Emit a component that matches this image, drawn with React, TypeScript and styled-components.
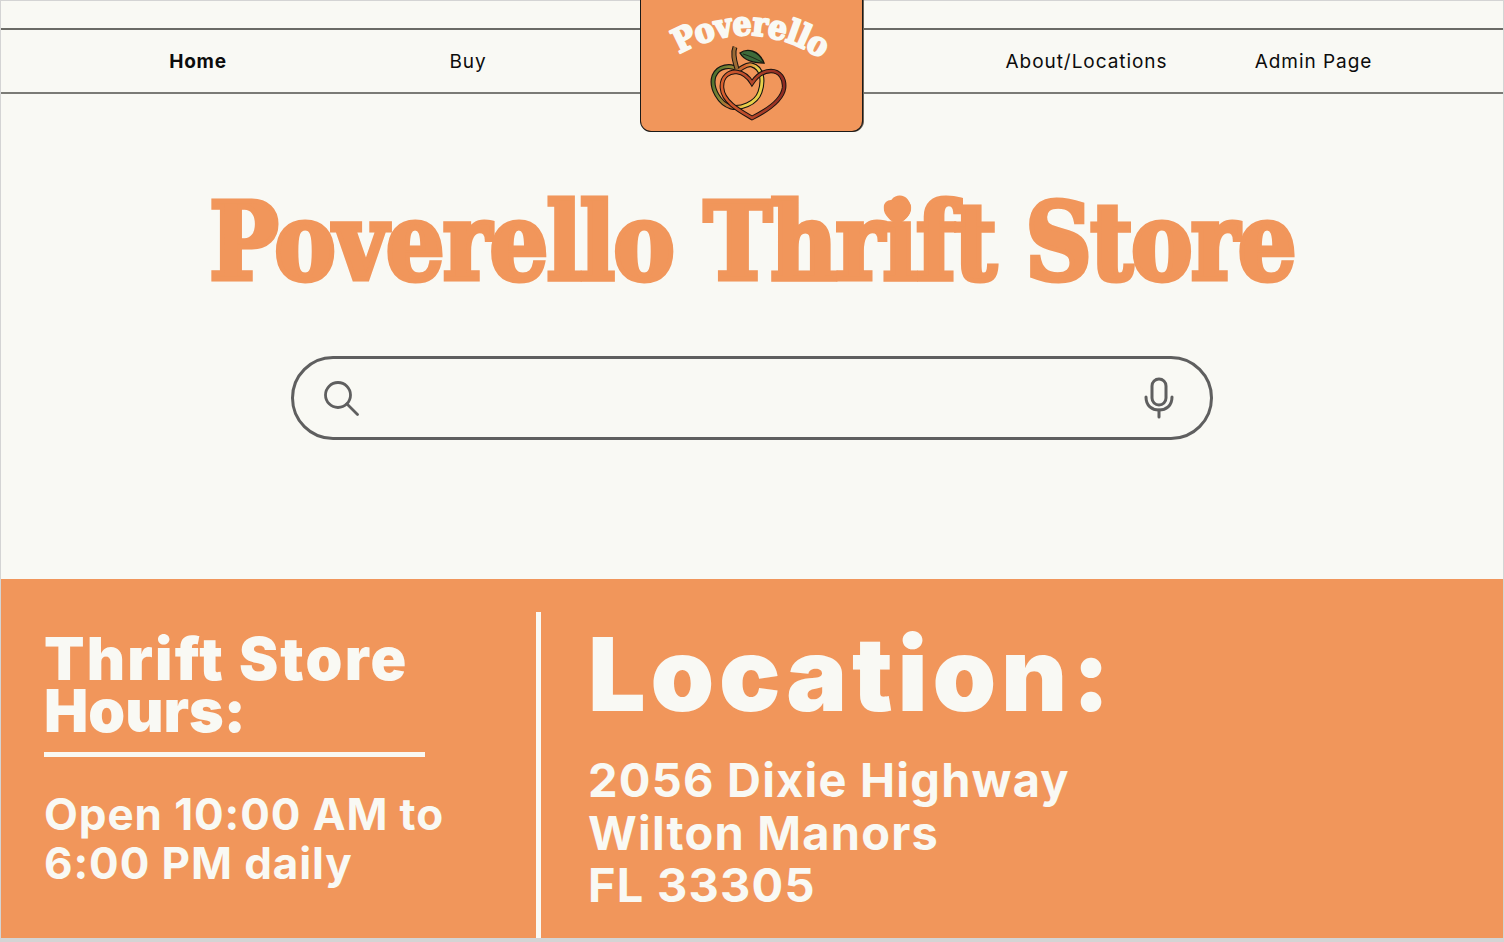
import React from "react";
import styled, { createGlobalStyle } from "styled-components";

const ORANGE = "#f1965b";
const CREAM = "#f9f9f4";
const BODY_FONT = `Inter, "Noto Sans", sans-serif`;
const DISPLAY_FONT = `"DejaVu Serif Condensed", "DejaVu Serif", serif`;

const Global = createGlobalStyle`
  html, body { margin: 0; padding: 0; background: #d6d6d6; }
  * { box-sizing: border-box; }
`;

const Frame = styled.div`
  width: 1504px;
  height: 942px;
  padding: 1px 1px 4px 1px;
  background: #d4d4d4;
  overflow: hidden;
`;
const Page = styled.main`
  height: 100%;
  display: flex;
  flex-direction: column;
  background: ${CREAM};
`;
const Header = styled.header`
  position: relative;
  padding-top: 27px;
`;
const Nav = styled.nav`
  height: 66px;
  display: grid;
  grid-template-columns: 270px 270px 1fr 227px 227px;
  padding: 2px 76px 0 62px;
  align-items: center;
  border-top: 2px solid #6b6b66;
  border-bottom: 2px solid #7b7b76;
`;
const NavLink = styled.a<{ $active?: boolean }>`
  justify-self: center;
  font: ${(p) => (p.$active ? 700 : 400)} 19px/24px ${BODY_FONT};
  letter-spacing: ${(p) => (p.$active ? 0.8 : 0.95)}px;
  color: #0c0c0c;
`;
const LogoCard = styled.div`
  position: absolute;
  top: -1px;
  left: 639px;
  width: 223px;
  height: 132px;
  background: ${ORANGE};
  border: 1px solid #1c1a18;
  border-top: 0;
  border-radius: 0 0 11px 11px;
  box-shadow: 1px 0 0 #6f6558;
`;
const Hero = styled.section`
  flex: 1;
  display: flex;
  flex-direction: column;
  align-items: center;
`;
const Title = styled.h1`
  margin: 83px 0 0;
  font: 700 106px/130px ${DISPLAY_FONT};
  letter-spacing: -1.4px;
  white-space: nowrap;
  color: ${ORANGE};
  -webkit-text-stroke: 5px ${ORANGE};
  transform: scaleX(0.96);
`;
const HeartI = styled.span`
  position: relative;
  display: inline-block;
`;
const HeartDot = styled.svg`
  position: absolute;
  left: 50%;
  top: 23px;
  width: 29px;
  height: 25px;
  margin-left: -17px;
  fill: ${ORANGE};
`;
const SearchBar = styled.div`
  width: 922px;
  height: 84px;
  margin: 49px 0 0 -1px;
  display: flex;
  align-items: center;
  justify-content: space-between;
  padding: 0 36px 0 29px;
  border: 3px solid #5f5f5f;
  border-radius: 42px;
  color: #5f5f5f;
`;
const Footer = styled.footer`
  height: 359px;
  display: grid;
  grid-template-columns: 535px 5px 1fr;
  background: ${ORANGE};
  color: ${CREAM};
  font-family: ${BODY_FONT};
`;
const HoursColumn = styled.div`
  padding: 54px 0 0 43px;
`;
const Divider = styled.div`
  margin-top: 33px;
  background: ${CREAM};
`;
const HoursTitle = styled.h2`
  margin: 0;
  width: 381px;
  padding-bottom: 15px;
  border-bottom: 5px solid ${CREAM};
  font-size: 59px;
  line-height: 52px;
  font-weight: 900;
  letter-spacing: 2.2px;
`;
const HoursWord = styled.span`
  letter-spacing: 0;
`;
const HoursText = styled.p`
  margin: 33px 0 0;
  font-size: 44px;
  line-height: 49px;
  font-weight: 700;
  letter-spacing: 0.9px;
`;
const LocationColumn = styled.div`
  padding: 30px 0 0 47px;
`;
const LocationTitle = styled.h2`
  margin: 0;
  font-size: 102px;
  line-height: 130px;
  font-weight: 900;
  letter-spacing: 4.8px;
`;
const Address = styled.p`
  margin: 15px 0 0;
  font-size: 47px;
  line-height: 52.5px;
  font-weight: 700;
  letter-spacing: 1.2px;
`;

const LogoArt = () => (
  <svg width="222" height="131" viewBox="1 0 222 131">
    <defs>
      <linearGradient id="apple" x1="0" y1="0" x2="1" y2="0.3">
        <stop offset="0" stopColor="#3d6b2c" />
        <stop offset="0.35" stopColor="#8a8a38" />
        <stop offset="0.6" stopColor="#d5612f" />
        <stop offset="0.85" stopColor="#e8d04a" />
      </linearGradient>
      <linearGradient id="heart" x1="0" y1="0" x2="1" y2="0">
        <stop offset="0" stopColor="#d9602f" />
        <stop offset="1" stopColor="#8e2a22" />
      </linearGradient>
      <path id="arc" d="M 28 61 Q 110 7 192 66" />
      <path id="heartShape" d="M112 118 C100 111 83 102 82 88 C81 76 90 71 97 72 C104 73 109 78 112 83 C116 77 123 71 131 71 C140 71 145 79 144 88 C142 102 124 112 112 118 Z" />
      <path id="appleShape" d="M98 70 C91 64 78 66 74 76 C70 88 80 104 91 107 C100 109 116 104 120 92 C124 80 122 68 112 65 C107 63 103 68 98 70 Z" />
    </defs>
    <text fontFamily={DISPLAY_FONT} fontWeight="700" fontSize="33" fill={CREAM} stroke={CREAM} strokeWidth="2" strokeLinejoin="round" textAnchor="middle" letterSpacing="-0.5">
      <textPath href="#arc" startOffset="50%">Poverello</textPath>
    </text>
    <use href="#appleShape" fill="none" stroke="#141410" strokeWidth="5" />
    <use href="#appleShape" fill="none" stroke="url(#apple)" strokeWidth="2.8" />
    <use href="#heartShape" fill="none" stroke="#171210" strokeWidth="4.6" />
    <use href="#heartShape" fill="none" stroke="url(#heart)" strokeWidth="2.6" />
    <path d="M97 69 C95 62 92 54 95 47" fill="none" stroke="#1a1510" strokeWidth="5" />
    <path d="M97 69 C95 62 92 54 95 47" fill="none" stroke="#9c6a35" strokeWidth="3" />
    <path d="M100 53 C107 48 119 50 124 63 C114 63 104 60 100 53 Z" fill="#3e6b3a" stroke="#16160f" strokeWidth="1.4" />
    <path d="M103 54 C110 56 116 59 122 62" fill="none" stroke="#16160f" strokeWidth="0.8" />
  </svg>
);

export default function App() {
  return (
    <Frame>
      <Global />
      <Page>
        <Header>
          <Nav>
            <NavLink $active>Home</NavLink>
            <NavLink>Buy</NavLink>
            <span />
            <NavLink>About/Locations</NavLink>
            <NavLink>Admin Page</NavLink>
          </Nav>
          <LogoCard>
            <LogoArt />
          </LogoCard>
        </Header>
        <Hero>
          <Title>
            Poverello Thr
            <HeartI>
              i
              <HeartDot viewBox="0 0 30 26" aria-hidden="true">
                <path d="M15 26 C8 22 0 16 0 8 C0 3 4 0 8 0 C11 0 13 2 15 5 C17 2 19 0 22 0 C26 0 30 3 30 8 C30 16 22 22 15 26 Z" />
              </HeartDot>
            </HeartI>
            ft Store
          </Title>
          <SearchBar>
            <svg width="36" height="36" viewBox="0 0 36 36" fill="none" stroke="currentColor" strokeWidth="2.8" strokeLinecap="round">
              <circle cx="15" cy="15" r="12.5" />
              <path d="M24 24 L34.5 34.5" />
            </svg>
            <svg width="30" height="42" viewBox="0 0 30 42" fill="none" stroke="currentColor" strokeWidth="3" strokeLinecap="round">
              <rect x="8" y="2" width="14" height="26" rx="7" />
              <path d="M2 20 C2 29 8 33 15 33 C22 33 28 29 28 20" />
              <path d="M15 33 V40" />
            </svg>
          </SearchBar>
        </Hero>
        <Footer>
          <HoursColumn>
            <HoursTitle>Thrift Store <HoursWord>Hours:</HoursWord></HoursTitle>
            <HoursText>Open 10:00 AM to<br />6:00 PM daily</HoursText>
          </HoursColumn>
          <Divider />
          <LocationColumn>
            <LocationTitle>Location:</LocationTitle>
            <Address>2056 Dixie Highway<br />Wilton Manors<br />FL 33305</Address>
          </LocationColumn>
        </Footer>
      </Page>
    </Frame>
  );
}
